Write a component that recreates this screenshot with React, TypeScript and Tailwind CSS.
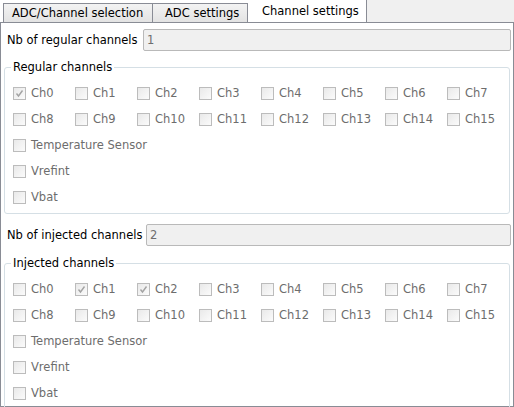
const CHANNELS = Array.from({ length: 16 }, (_, i) => `Ch${i}`)

type CheckProps = { label: string; checked?: boolean }

function Check({ label, checked }: CheckProps) {
  return (
    <div className="flex h-[26px] items-center gap-[5px]">
      <span className="flex h-[13px] w-[13px] shrink-0 items-center justify-center border border-[#bcbcbc] bg-gradient-to-br from-[#e9e9e9] to-[#fbfbfb]">
        {checked && (
          <svg width="11" height="11" viewBox="0 0 11 11" fill="none">
            <polyline
              points="2.5,5.5 4.5,8 8.5,2.5"
              stroke="#a3a3a3"
              strokeWidth="1.4"
            />
          </svg>
        )}
      </span>
      <span className="whitespace-nowrap text-[#6d6d6d]">{label}</span>
    </div>
  )
}

function Group({ title, checked }: { title: string; checked: number[] }) {
  return (
    <fieldset className="mx-[3px] rounded-[3px] border border-[#d5dfe5] pb-[3px] pl-[8px]">
      <legend className="-ml-[2px] h-[14px] px-[2px] leading-[14px] text-black">
        {title}
      </legend>
      <div className="mt-[6px] grid grid-cols-[repeat(8,62px)]">
        {CHANNELS.map((ch, i) => (
          <Check key={ch} label={ch} checked={checked.includes(i)} />
        ))}
      </div>
      <Check label="Temperature Sensor" />
      <Check label="Vrefint" />
      <Check label="Vbat" />
    </fieldset>
  )
}

function CountRow({ label, value, labelWidth }: { label: string; value: string; labelWidth: string }) {
  return (
    <div className="flex h-[22px] items-center pl-[6px] pr-[2px]">
      <span className={`${labelWidth} whitespace-nowrap text-black`}>{label}</span>
      <div className="flex h-[22px] flex-1 items-center rounded-[2px] border border-[#b9b9b9] bg-[#f0f0f0] pl-[3px] text-[#6d6d6d]">
        {value}
      </div>
    </div>
  )
}

export default function App() {
  return (
    <div className="h-[407px] w-[514px] overflow-hidden bg-white font-['DejaVu_Sans',sans-serif] text-[11.5px] leading-[14px]">
      {/* Tab strip */}
      <div className="flex h-[22px] items-end">
        <div className="w-[3px]" />
        <div className="flex h-[19px] w-[150px] items-center border border-b-0 border-[#898c95] bg-gradient-to-b from-[#f3f3f3] to-[#e3e3e3] pl-[8px] text-black">
          ADC/Channel selection
        </div>
        <div className="flex h-[19px] w-[95px] items-center border border-b-0 border-l-0 border-[#898c95] bg-gradient-to-b from-[#f3f3f3] to-[#e3e3e3] pl-[12px] text-black">
          ADC settings
        </div>
        <div className="flex h-[22px] w-[119px] items-center border-r border-[#898c95] bg-white pl-[14px] text-black">
          Channel settings
        </div>
        <div className="h-[22px] flex-1 bg-[#f0f0f0]" />
      </div>

      {/* Tab page */}
      <div className="h-[385px] border border-[#898c95] bg-white pt-[6px]">
        <CountRow label="Nb of regular channels" value="1" labelWidth="w-[136px]" />
        <div className="mt-[9px]">
          <Group title="Regular channels" checked={[0]} />
        </div>
        <div className="mt-[10px]">
          <CountRow label="Nb of injected channels" value="2" labelWidth="w-[139px]" />
        </div>
        <div className="mt-[10px]">
          <Group title="Injected channels" checked={[1, 2]} />
        </div>
      </div>
    </div>
  )
}
